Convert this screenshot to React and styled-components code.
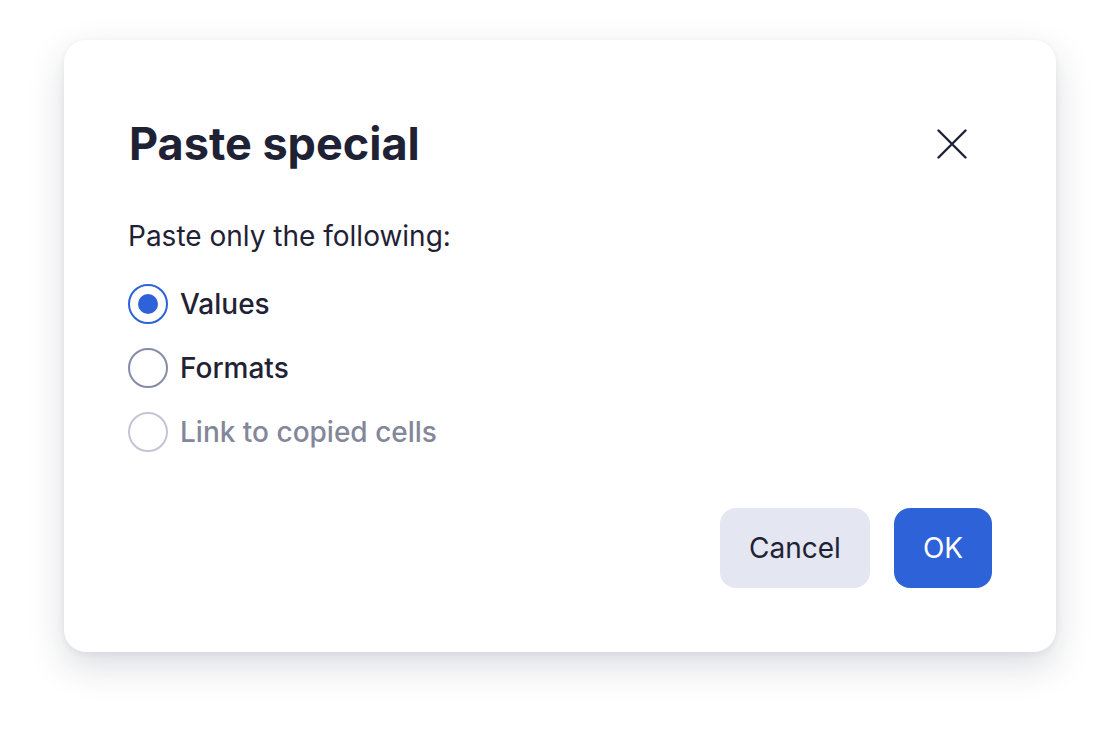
import React, { useState } from "react";
import styled, { createGlobalStyle } from "styled-components";

const Global = createGlobalStyle`
  html, body { margin: 0; padding: 0; background: #ffffff; }
  body { font-family: Inter, "Noto Sans", sans-serif; -webkit-font-smoothing: antialiased; }
`;

const Page = styled.div`
  width: 1120px;
  height: 740px;
  box-sizing: border-box;
  padding: 40px 64px 88px 64px;
  display: flex;
  background: #ffffff;
`;

const Dialog = styled.div`
  flex: 1;
  background: #ffffff;
  border-radius: 22px;
  box-shadow: 0 14px 36px rgba(34, 38, 66, 0.16), 0 2px 6px rgba(34, 38, 66, 0.06);
  box-sizing: border-box;
  padding: 56px 64px 64px 64px;
  display: flex;
  flex-direction: column;
`;

const Header = styled.div`
  display: flex;
  align-items: center;
  justify-content: space-between;
  height: 96px;
`;

const Title = styled.h1`
  margin: 0 0 0 1px;
  font-family: Inter, sans-serif;
  font-weight: 700;
  font-size: 45px;
  line-height: 56px;
  color: #1f2234;
`;

const CloseButton = styled.button`
  width: 48px;
  height: 48px;
  margin-right: 16px;
  border: none;
  background: transparent;
  padding: 0;
  display: flex;
  align-items: center;
  justify-content: center;
  cursor: pointer;
  color: #1f2234;
`;

const Prompt = styled.p`
  margin: 26px 0 0 0;
  font-size: 28px;
  line-height: 36px;
  color: #1f2234;
`;

const Options = styled.div`
  margin-top: 30px;
  display: flex;
  flex-direction: column;
  gap: 24px;
`;

const Option = styled.label`
  display: flex;
  align-items: center;
  gap: 12px;
  height: 40px;
  font-size: 28px;
  font-weight: 500;
  color: ${(p) => (p.$disabled ? "#84879a" : "#1f2234")};
  cursor: ${(p) => (p.$disabled ? "default" : "pointer")};
`;

const Circle = styled.span`
  width: 40px;
  height: 40px;
  box-sizing: border-box;
  border-radius: 50%;
  border: 2px solid
    ${(p) => (p.$checked ? "#2d62d8" : p.$disabled ? "#c3c5d4" : "#868ba8")};
  display: flex;
  align-items: center;
  justify-content: center;
  flex-shrink: 0;
  &::after {
    content: "";
    width: 20px;
    height: 20px;
    border-radius: 50%;
    background: #2d62d8;
    display: ${(p) => (p.$checked ? "block" : "none")};
  }
`;

const Footer = styled.div`
  margin-top: auto;
  display: flex;
  justify-content: flex-end;
  gap: 24px;
`;

const Button = styled.button`
  height: 80px;
  padding: 0 24px;
  border: none;
  border-radius: 16px;
  font-family: Inter, sans-serif;
  font-size: 28px;
  background: ${(p) => (p.$primary ? "#2d62d8" : "#e4e6f1")};
  color: ${(p) => (p.$primary ? "#ffffff" : "#1f2234")};
  min-width: ${(p) => (p.$primary ? "98px" : "150px")};
  cursor: pointer;
`;

const options = [
  { id: "values", label: "Values" },
  { id: "formats", label: "Formats" },
  { id: "link", label: "Link to copied cells", disabled: true },
];

export default function App() {
  const [value, setValue] = useState("values");
  return (
    <>
      <Global />
      <Page>
        <Dialog>
          <Header>
            <Title>Paste special</Title>
            <CloseButton aria-label="Close">
              <svg width="30" height="30" viewBox="0 0 30 30" fill="none">
                <path d="M1.5 1.5 L28.5 28.5 M28.5 1.5 L1.5 28.5" stroke="currentColor" strokeWidth="2.4" strokeLinecap="round" />
              </svg>
            </CloseButton>
          </Header>
          <Prompt>Paste only the following:</Prompt>
          <Options>
            {options.map((o) => (
              <Option
                key={o.id}
                $disabled={o.disabled}
                onClick={() => !o.disabled && setValue(o.id)}
              >
                <Circle $checked={value === o.id} $disabled={o.disabled} />
                {o.label}
              </Option>
            ))}
          </Options>
          <Footer>
            <Button>Cancel</Button>
            <Button $primary>OK</Button>
          </Footer>
        </Dialog>
      </Page>
    </>
  );
}
